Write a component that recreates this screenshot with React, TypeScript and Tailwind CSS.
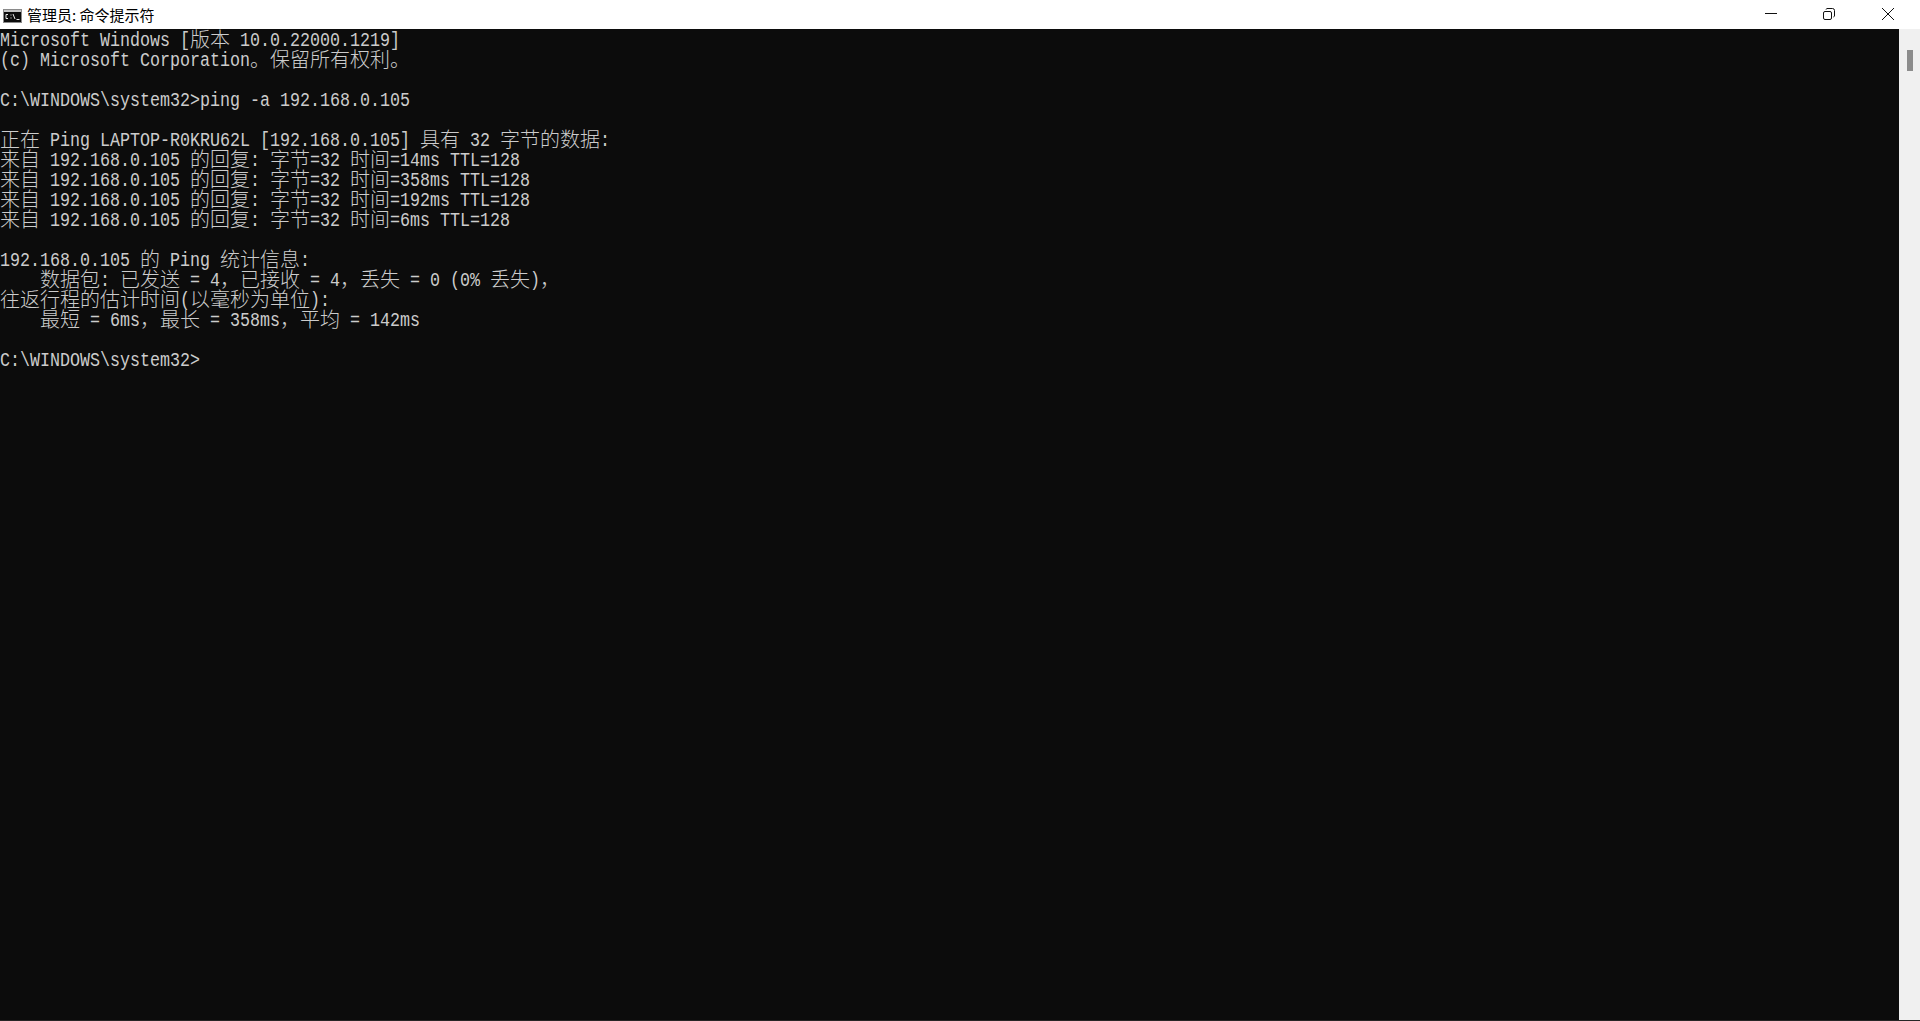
const lines = [
  'Microsoft Windows [版本 10.0.22000.1219]',
  '(c) Microsoft Corporation。保留所有权利。',
  '',
  'C:\\WINDOWS\\system32>ping -a 192.168.0.105',
  '',
  '正在 Ping LAPTOP-R0KRU62L [192.168.0.105] 具有 32 字节的数据:',
  '来自 192.168.0.105 的回复: 字节=32 时间=14ms TTL=128',
  '来自 192.168.0.105 的回复: 字节=32 时间=358ms TTL=128',
  '来自 192.168.0.105 的回复: 字节=32 时间=192ms TTL=128',
  '来自 192.168.0.105 的回复: 字节=32 时间=6ms TTL=128',
  '',
  '192.168.0.105 的 Ping 统计信息:',
  '    数据包: 已发送 = 4，已接收 = 4，丢失 = 0 (0% 丢失)，',
  '往返行程的估计时间(以毫秒为单位):',
  '    最短 = 6ms，最长 = 358ms，平均 = 142ms',
  '',
  'C:\\WINDOWS\\system32>',
];

// console grid: latin cells are 10px wide and 20px tall, CJK cells 20px square
function ConsoleLine({ text }: { text: string }) {
  const runs = text.match(/[^\x00-\x7f]+|[\x00-\x7f]+/g) ?? [];
  return (
    <div className="flex h-5 whitespace-pre">
      {runs.map((run, i) =>
        run.charCodeAt(0) > 127 ? (
          <span key={i} className="h-5 font-['Noto_Sans_CJK_SC',sans-serif] text-[20px] leading-5 font-light">
            {run}
          </span>
        ) : (
          <span key={i} className="h-5" style={{ width: run.length * 10 }}>
            <span className="block origin-left scale-x-[0.8333] font-['Liberation_Mono',monospace] text-[20px] leading-6">
              {run}
            </span>
          </span>
        ),
      )}
    </div>
  );
}

function CmdIcon() {
  return (
    <svg width="19" height="14" viewBox="0 0 19 14" className="mt-[3px] shrink-0">
      <rect x="0.5" y="0.5" width="18" height="13" fill="#0c0c0c" stroke="#8a8a8a" />
      <rect x="1" y="1" width="17" height="2" fill="#c4c4c4" />
      <path d="M5 5.5H3v4h2M7.5 6h1M7.5 9h1M10 5l2 5M13.5 10.5h3" stroke="#e8e8e8" fill="none" />
    </svg>
  );
}

export default function App() {
  return (
    <div className="flex h-[1021px] w-[1920px] flex-col overflow-hidden bg-white">
      {/* Title bar */}
      <div className="flex h-[29px] shrink-0 items-center">
        <div className="flex flex-1 items-center gap-[5px] pl-[3px]">
          <CmdIcon />
          <span className="font-['Noto_Sans_CJK_SC',sans-serif] text-[15px] leading-5 text-black">管理员: 命令提示符</span>
        </div>
        <div className="flex h-full items-center pr-[3px] pb-px">
          <div className="flex h-full w-[56px] items-center justify-center">
            <svg width="12" height="12" viewBox="0 0 12 12"><path d="M0 5.5h12" stroke="#111" /></svg>
          </div>
          <div className="flex h-full w-[60px] items-center justify-center">
            <svg width="12" height="12" viewBox="0 0 12 12" fill="none" stroke="#111">
              <rect x="0.5" y="3.5" width="8" height="8" rx="1.5" />
              <path d="M3 1.5a1.5 1.5 0 0 1 1-1h5.5a2 2 0 0 1 2 2V8a1.5 1.5 0 0 1-1 1" />
            </svg>
          </div>
          <div className="flex h-full w-[58px] items-center justify-center">
            <svg width="12" height="12" viewBox="0 0 12 12"><path d="M0 0l12 12M12 0L0 12" stroke="#111" /></svg>
          </div>
        </div>
      </div>

      {/* Console */}
      <div className="flex min-h-0 flex-1">
        <div className="flex-1 bg-[#0c0c0c] text-[#cccccc]">
          {lines.map((line, i) => (
            <ConsoleLine key={i} text={line} />
          ))}
        </div>
        {/* Scrollbar */}
        <div className="w-[21px] shrink-0 bg-[#f0f0f0] pt-[21px] pl-2">
          <div className="h-[21px] w-[6px] bg-[#8c8c8c]" />
        </div>
      </div>
      <div className="h-px shrink-0 bg-[#262626]" />
    </div>
  );
}
